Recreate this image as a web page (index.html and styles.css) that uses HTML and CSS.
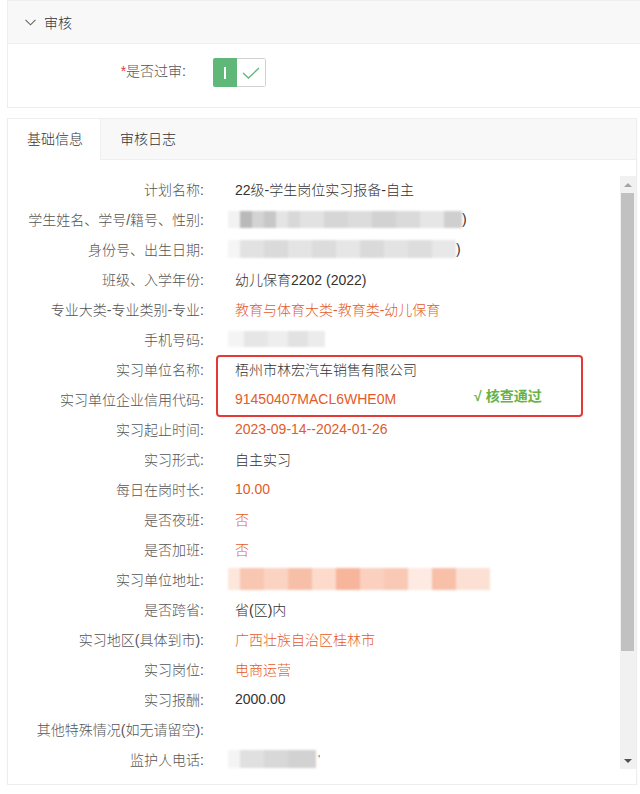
FILE: index.html
```html
<!DOCTYPE html>
<html lang="zh-CN">

<head>
  <meta charset="UTF-8">
  <meta name="viewport" content="width=device-width, initial-scale=1.0">
  <title>审核</title>
  <link rel="stylesheet" href="styles.css">
</head>

<body>
  <!-- 审核 -->
  <div class="panel-top">
    <div class="panel-head">
      <svg class="chevron" width="11" height="7" viewBox="0 0 11 7">
        <path d="M0.5 0.8 L5.5 5.8 L10.5 0.8" fill="none" stroke="#666" stroke-width="1.1" />
      </svg>
      <span>审核</span>
    </div>
    <div class="panel-body">
      <div class="form-label"><i class="req">*</i>是否过审:</div>
      <div class="switch">
        <span class="switch-on"><i class="bar"></i></span>
        <span class="switch-off">
          <svg width="18" height="12" viewBox="0 0 18 12">
            <path d="M1 6 L6.5 11 L17 1" fill="none" stroke="#5fb878" stroke-width="1.3" />
          </svg>
        </span>
      </div>
    </div>
  </div>

  <!-- 基础信息 -->
  <div class="panel-tab">
    <ul class="tab-title">
      <li class="tab active">基础信息</li>
      <li class="tab">审核日志</li>
    </ul>
    <div class="tab-content">
      <div class="info-list">
        <div class="row"><div class="label">计划名称:</div><div class="value">22级-学生岗位实习报备-自主</div></div>
        <div class="row"><div class="label">学生姓名、学号/籍号、性别:</div><div class="value"><span class="mosaic m-name"></span>)</div></div>
        <div class="row"><div class="label">身份号、出生日期:</div><div class="value"><span class="mosaic m-id"></span>)</div></div>
        <div class="row"><div class="label">班级、入学年份:</div><div class="value">幼儿保育2202 (2022)</div></div>
        <div class="row"><div class="label">专业大类-专业类别-专业:</div><div class="value hl">教育与体育大类-教育类-幼儿保育</div></div>
        <div class="row"><div class="label">手机号码:</div><div class="value"><span class="mosaic m-phone"></span></div></div>
        <div class="check-group">
          <div class="row"><div class="label">实习单位名称:</div><div class="value">梧州市林宏汽车销售有限公司</div></div>
          <div class="row"><div class="label">实习单位企业信用代码:</div><div class="value hl">91450407MACL6WHE0M<span class="pass">√ 核查通过</span></div></div>
          <!-- 红框标注 -->
          <div class="check-box"></div>
        </div>
        <div class="row"><div class="label">实习起止时间:</div><div class="value hl">2023-09-14--2024-01-26</div></div>
        <div class="row"><div class="label">实习形式:</div><div class="value">自主实习</div></div>
        <div class="row"><div class="label">每日在岗时长:</div><div class="value hl">10.00</div></div>
        <div class="row"><div class="label">是否夜班:</div><div class="value hl">否</div></div>
        <div class="row"><div class="label">是否加班:</div><div class="value hl">否</div></div>
        <div class="row"><div class="label">实习单位地址:</div><div class="value"><span class="mosaic m-addr"></span></div></div>
        <div class="row"><div class="label">是否跨省:</div><div class="value">省(区)内</div></div>
        <div class="row"><div class="label">实习地区(具体到市):</div><div class="value hl">广西壮族自治区桂林市</div></div>
        <div class="row"><div class="label">实习岗位:</div><div class="value hl">电商运营</div></div>
        <div class="row"><div class="label">实习报酬:</div><div class="value">2000.00</div></div>
        <div class="row"><div class="label">其他特殊情况(如无请留空):</div><div class="value"></div></div>
        <div class="row"><div class="label">监护人电话:</div><div class="value"><span class="mosaic m-guard"></span><span class="tail">'</span></div></div>
      </div>
      <!-- 滚动条 -->
      <div class="scrollbar">
        <div class="sb-btn"><i class="arrow-up"></i></div>
        <div class="sb-thumb"></div>
        <div class="sb-rest"></div>
        <div class="sb-btn"><i class="arrow-down"></i></div>
      </div>
    </div>
  </div>
</body>

</html>
```

FILE: styles.css
```css
body {
  margin: 0;
  font-family: "Liberation Sans", "Noto Sans CJK SC", sans-serif;
  font-size: 14px;
  font-weight: 300;
  color: #333;
  background: #fff;
  overflow: hidden;
}

ul {
  list-style: none;
  margin: 0;
  padding: 0;
}

/* 审核面板 */
.panel-top {
  margin: 0 -20px 0 7px;
  border: 1px solid #eee;
  border-right: none;
}

.panel-head {
  height: 42px;
  display: flex;
  align-items: center;
  padding-left: 17px;
  background-color: #f8f8f8;
  border-bottom: 1px solid #eee;
  color: #333;
}

.chevron {
  margin-right: 8px;
}

.panel-body {
  height: 63px;
  display: flex;
  align-items: flex-start;
  padding-top: 14px;
  box-sizing: border-box;
}

.form-label {
  width: 178px;
  text-align: right;
  line-height: 26px;
  color: #555;
}

.req {
  font-style: normal;
  color: #e53935;
}

.switch {
  margin-left: 27px;
  display: flex;
  width: 53px;
  height: 29px;
  border-radius: 2px;
  overflow: hidden;
}

.switch-on {
  width: 24px;
  background-color: #5fb878;
  display: flex;
  align-items: center;
  justify-content: center;
}

.bar {
  width: 2px;
  height: 12px;
  background-color: #fff;
}

.switch-off {
  flex: 1;
  border: 1px solid #d2d2d2;
  border-left: none;
  border-radius: 0 2px 2px 0;
  display: flex;
  align-items: center;
  justify-content: center;
}

/* 选项卡面板 */
.panel-tab {
  margin: 10px 3px 0 7px;
  border: 1px solid #eee;
  box-shadow: 0 1px 2px rgba(0, 0, 0, 0.04);
}

.tab-title {
  display: flex;
  height: 40px;
  background-color: #f8f8f8;
  border-bottom: 1px solid #eee;
}

.tab {
  padding: 0 19px;
  line-height: 40px;
  color: #333;
  cursor: pointer;
}

.tab.active {
  width: 93px;
  padding-right: 0;
  box-sizing: border-box;
  background-color: #fff;
  border-right: 1px solid #eee;
  height: 41px;
}

.tab-content {
  display: flex;
  padding: 14px 0 13px;
}

.info-list {
  flex: 1;
  height: 597px;
  overflow: hidden;
}

/* 滚动条 */
.scrollbar {
  width: 16px;
  margin: 2px 0;
  display: flex;
  flex-direction: column;
  background-color: #f1f1f1;
}

.sb-btn {
  height: 17px;
  display: flex;
  align-items: center;
  justify-content: center;
}

.arrow-up {
  border-left: 4px solid transparent;
  border-right: 4px solid transparent;
  border-bottom: 4px solid #a3a3a3;
}

.arrow-down {
  border-left: 4px solid transparent;
  border-right: 4px solid transparent;
  border-top: 4px solid #505050;
}

.sb-thumb {
  height: 458px;
  margin: 0 2px 0 1px;
  background-color: #c1c1c1;
}

.sb-rest {
  flex: 1;
}

.row {
  display: flex;
  height: 30px;
  align-items: center;
}

.label {
  width: 196px;
  flex-shrink: 0;
  text-align: right;
  color: #555;
  white-space: nowrap;
}

.value {
  padding-left: 31px;
  color: #333;
  white-space: nowrap;
  display: flex;
  align-items: center;
}

.value.hl {
  color: #e35b28;
}

.pass {
  margin-left: 78px;
  margin-top: -8px;
  color: #67b346;
  font-weight: bold;
}

.check-group {
  position: relative;
}

.check-box {
  position: absolute;
  left: 208px;
  top: 1px;
  width: 367px;
  height: 62px;
  box-sizing: border-box;
  border: 2px solid #e53935;
  border-radius: 4px;
}

/* 打码 */
.mosaic {
  display: inline-block;
  margin-left: -7px;
  filter: blur(1.2px);
}

.m-name {
  width: 234px;
  height: 17px;
  background: linear-gradient(90deg, #f2f2f2 0 12px, #b9b9b9 12px 24px, #d3d3d3 24px 36px, #c7c7c7 36px 48px,
      #e4e4e4 48px 60px, #d8d8d8 60px 72px, #e2e2e2 72px 96px, #d6d6d6 96px 120px, #dcdcdc 120px 144px,
      #d2d2d2 144px 168px, #dadada 168px 192px, #e6e6e6 192px 216px, #cfcfcf 216px 234px);
}

.m-id {
  width: 228px;
  height: 18px;
  background: linear-gradient(90deg, #f5f5f5 0 12px, #e2e2e2 12px 36px, #dadada 36px 60px, #e4e4e4 60px 84px,
      #dcdcdc 84px 108px, #e6e6e6 108px 132px, #dadada 132px 156px, #e3e3e3 156px 180px, #dddddd 180px 204px,
      #e8e8e8 204px 228px);
}

.m-phone {
  width: 97px;
  height: 16px;
  background: linear-gradient(90deg, #f4f4f4 0 16px, #e6e6e6 16px 40px, #eeeeee 40px 60px, #e2e2e2 60px 80px,
      #ececec 80px 97px);
}

.m-addr {
  width: 262px;
  height: 22px;
  background: linear-gradient(90deg, #fde6dc 0 12px, #f9c6b2 12px 36px, #fbd3c3 36px 60px, #f8bfa8 60px 84px,
      #fcdacc 84px 108px, #f7b59b 108px 132px, #fbd0bf 132px 156px, #f9c9b6 156px 180px, #fdeae2 180px 204px,
      #f8c0a9 204px 228px, #fce0d4 228px 262px);
}

.m-guard {
  width: 88px;
  height: 18px;
  background: linear-gradient(90deg, #f4f4f4 0 12px, #e0e0e0 12px 36px, #d8d8d8 36px 60px, #d2d2d2 60px 88px);
}

.tail {
  margin-left: 2px;
  font-size: 11px;
  color: #666;
}
```
